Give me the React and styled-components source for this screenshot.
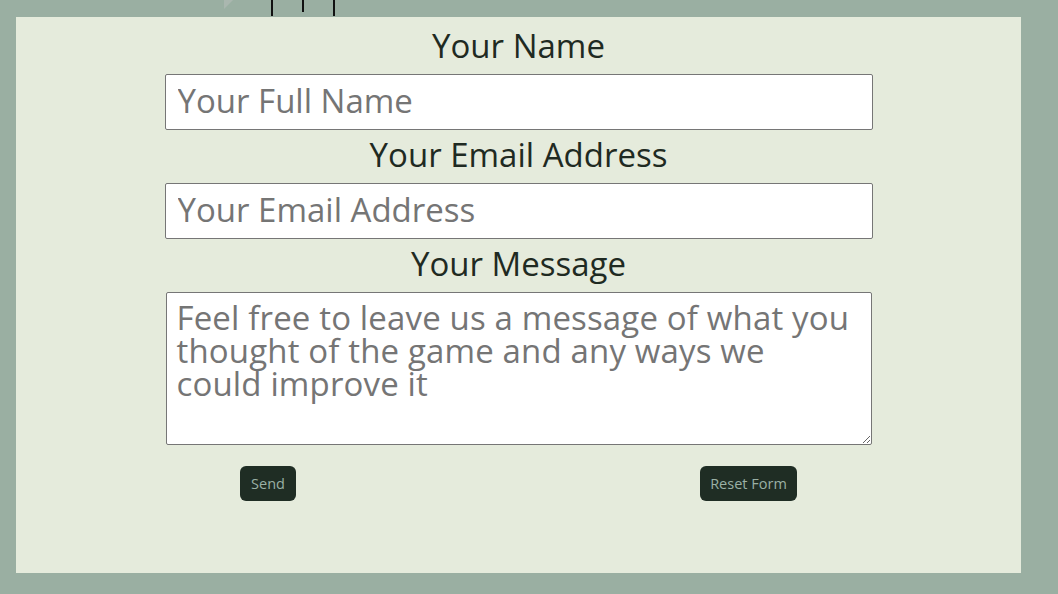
import styled, { createGlobalStyle } from 'styled-components';

const GlobalStyle = createGlobalStyle`
 html, body {
  margin: 0;
  padding: 0;
  background-color: #9aafa2;
  font-family: 'Open Sans', 'DejaVu Sans', sans-serif;
 }
`;

const Page = styled.div`
 display: flex;
 flex-direction: column;
 width: 1058px;
 height: 594px;
 overflow: hidden;
`;

/* bits of the picture above, cut off by the scroll */
const TopStrip = styled.div`
 height: 17px;
 flex-shrink: 0;
`;

const Panel = styled.section`
 display: flex;
 flex-direction: column;
 align-items: center;
 margin: 0 37px 21px 16px;
 height: 556px;
 padding-top: 4px;
 box-sizing: border-box;
 background-color: #e5ebdc;
`;

const Form = styled.form`
 display: flex;
 flex-direction: column;
 align-items: center;
 width: 100%;
`;

const Label = styled.label`
 display: block;
 height: 53px;
 line-height: 50px;
 font-size: 33px;
 color: #1f2a22;
 text-align: center;
`;

const Input = styled.input`
 box-sizing: border-box;
 width: 708px;
 height: 56px;
 padding: 0 12px 3px;
 border: 1px solid #767676;
 border-radius: 2px;
 background: white;
 font-family: inherit;
 font-size: 33px;
 color: #333;

 &::placeholder {
  color: #757575;
 }
`;

const TextArea = styled.textarea`
 box-sizing: border-box;
 width: 706px;
 height: 153px;
 padding: 8px 10px 5px;
 border: 1px solid #767676;
 border-radius: 2px;
 background: white;
 font-family: inherit;
 font-size: 33px;
 line-height: 33px;
 letter-spacing: 0.15px;
 color: #333;
 resize: vertical;

 &::placeholder {
  color: #757575;
 }
`;

const Buttons = styled.div`
 display: flex;
 justify-content: space-around;
 align-self: stretch;
 padding: 0 22px;
 margin-top: 21px;
`;

const Button = styled.button`
 height: 35px;
 width: ${({ w }) => w}px;
 padding: 0;
 border: none;
 border-radius: 6px;
 background-color: #1f2d24;
 color: #9ab0a4;
 font-family: inherit;
 font-size: 14.5px;
 cursor: pointer;
`;

const App = () => {
 return (
  <Page>
   <GlobalStyle />
   <TopStrip>
    <svg width="1058" height="17" viewBox="0 0 1058 17">
     <polygon points="224,0 233,0 224,9" fill="#aab7af" />
     <rect x="271" y="0" width="2" height="16" fill="#111" />
     <rect x="302" y="0" width="2" height="12" fill="#111" />
     <rect x="333" y="0" width="2" height="16" fill="#111" />
    </svg>
   </TopStrip>
   <Panel>
    <Form onSubmit={(e) => e.preventDefault()}>
     <Label htmlFor="name">Your Name</Label>
     <Input id="name" placeholder="Your Full Name" />
     <Label htmlFor="email">Your Email Address</Label>
     <Input id="email" placeholder="Your Email Address" />
     <Label htmlFor="message">Your Message</Label>
     <TextArea
      id="message"
      placeholder={'Feel free to leave us a message of what you\nthought of the game and any ways we\ncould improve it'}
     />
     <Buttons>
      <Button w={56} type="submit">Send</Button>
      <Button w={97} type="reset">Reset Form</Button>
     </Buttons>
    </Form>
   </Panel>
  </Page>
 );
};

export default App;
